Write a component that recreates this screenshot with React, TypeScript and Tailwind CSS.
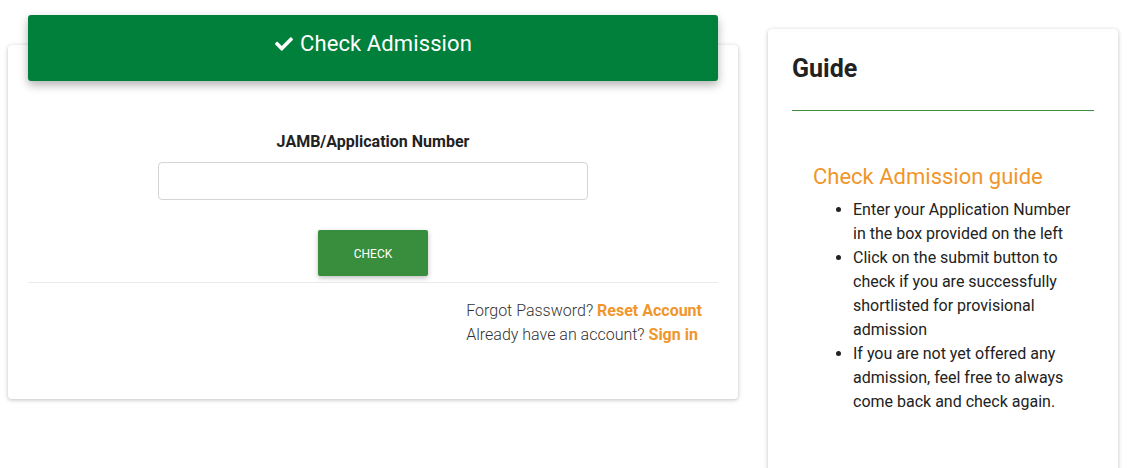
import React from "react";

export default function App() {
  return (
    <div className="w-[1130px] h-[468px] bg-white overflow-hidden" style={{ fontFamily: "Roboto, 'Liberation Sans', sans-serif" }}>
      <div className="flex items-start pl-[8px]">
        <div className="w-[730px] mt-[45px] bg-white rounded-[4px] shadow-[0_1px_4px_rgba(0,0,0,0.25)] px-[20px] pb-[24px]">
          <div className="-mt-[30px] h-[66px] bg-[#00803a] rounded-[3px] shadow-[0_4px_10px_rgba(0,0,0,0.3)] flex items-start justify-center gap-[6px] pt-[18px] text-white">
            <svg width="20" height="18" viewBox="0 0 512 512" className="mt-[2px]">
              <path fill="currentColor" d="M173.9 439.4l-166.4-166.4c-10-10-10-26.2 0-36.2l36.2-36.2c10-10 26.2-10 36.2 0L192 312.7 432.1 72.6c10-10 26.2-10 36.2 0l36.2 36.2c10 10 10 26.2 0 36.2L210.1 439.4c-10 10-26.2 10-36.2 0z" />
            </svg>
            <span className="text-[22px] leading-[22px] tracking-[0.1px]">Check Admission</span>
          </div>
          <div className="flex flex-col items-center pt-[52px]">
            <div className="text-[16px] leading-[18px] font-bold text-[#222]">JAMB/Application Number</div>
            <input className="mt-[11px] w-[430px] h-[38px] border border-[#d4d4d4] rounded-[4px] outline-none" />
            <button className="mt-[30px] w-[110px] h-[46px] bg-[#388e3c] text-white text-[12px] pt-[1px] rounded-[2px] shadow-[0_2px_5px_rgba(0,0,0,0.25)]">CHECK</button>
          </div>
          <div className="mt-[6px] border-t border-[#eaeaea]" />
          <div className="flex justify-end pr-[16px] pt-[16px]">
            <div className="text-[16px] leading-[24px] text-[#333] font-light">
              <div>Forgot Password? <span className="font-bold text-[#f0962a]">Reset Account</span></div>
              <div>Already have an account? <span className="font-bold text-[#f0962a]">Sign in</span></div>
            </div>
          </div>
          <div className="h-[28px]" />
        </div>
        <div className="ml-[30px] mt-[29px] w-[350px] h-[460px] bg-white rounded-[4px] shadow-[0_1px_4px_rgba(0,0,0,0.25)] px-[24px] pt-[24px]">
          <div className="text-[25px] leading-[32px] font-bold text-[#222]">Guide</div>
          <div className="mt-[25px] border-t border-[#3f8f3f]" />
          <div className="pl-[21px] pt-[52px]">
            <div className="text-[22px] leading-[28px] text-[#f0962a]">Check Admission guide</div>
            <ul className="list-disc pl-[40px] mt-[7px] w-[265px] text-[16px] leading-[24px] text-[#222]">
              <li>Enter your Application Number in the box provided on the left</li>
              <li>Click on the submit button to check if you are successfully shortlisted for provisional admission</li>
              <li>If you are not yet offered any admission, feel free to always come back and check again.</li>
            </ul>
          </div>
        </div>
      </div>
    </div>
  );
}
